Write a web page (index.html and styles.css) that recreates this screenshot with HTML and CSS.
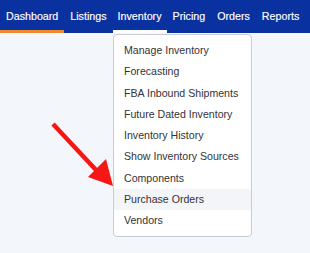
FILE: index.html
```html
<!DOCTYPE html>
<html lang="en">
<head>
    <meta charset="UTF-8">
    <title>inventory menu</title>
    <link rel="stylesheet" href="styles.css">
</head>
<body>
<div id="nav">
    <a href="javascript:" class="navItem active">Dashboard</a>
    <a href="javascript:" class="navItem">Listings</a>
    <a href="javascript:" class="navItem open">Inventory</a>
    <a href="javascript:" class="navItem">Pricing</a>
    <a href="javascript:" class="navItem">Orders</a>
    <a href="javascript:" class="navItem">Reports</a>
    <a href="javascript:" class="navItem">Help</a>
</div>

<ul id="menu">
    <li>Manage Inventory</li>
    <li>Forecasting</li>
    <li>FBA Inbound Shipments</li>
    <li>Future Dated Inventory</li>
    <li>Inventory History</li>
    <li>Show Inventory Sources</li>
    <li>Components</li>
    <li class="hover">Purchase Orders</li>
    <li>Vendors</li>
</ul>

<svg id="arrow" width="310" height="253" viewBox="0 0 310 253">
    <line x1="53" y1="124" x2="96" y2="170" stroke="#f51616" stroke-width="4.5"/>
    <polygon points="113,186 88,177 106,159" fill="#f51616"/>
</svg>
</body>
</html>
```

FILE: styles.css
```css
*{
    padding: 0;
    margin: 0;
    list-style: none;
    text-decoration: none;
    box-sizing: border-box;
}
body{
    width: 310px;
    height: 253px;
    overflow: hidden;
    background: #f3f6fa;
    font-family: "Liberation Sans", Arial, sans-serif;
    position: relative;
}
#nav{
    display: flex;
    height: 33px;
    background: #0a31a0;
    white-space: nowrap;
}
.navItem{
    display: block;
    flex-shrink: 0;
    padding: 3px 6px 0;
    line-height: 26px;
    border-bottom: 3px solid transparent;
    color: #fff;
    font-size: 10.7px;
    -webkit-text-stroke: 0.15px #fff;
}
.navItem.active{
    border-bottom-color: #ec8a2c;
}
.navItem.open{
    border-bottom-color: #fff;
    padding: 3px 5px 0;
}
#menu{
    position: absolute;
    left: 113px;
    top: 34px;
    width: 139px;
    padding: 5px 0;
    background: #fff;
    border: 1px solid #c8ccd3;
    border-radius: 4px;
    z-index: 2;
}
#menu li{
    height: 21.25px;
    line-height: 21.25px;
    padding-left: 10px;
    font-size: 10.6px;
    color: #333338;
}
#menu .hover{
    background: #f3f5f8;
}
#arrow{
    position: absolute;
    left: 0;
    top: 0;
    z-index: 3;
}
```
